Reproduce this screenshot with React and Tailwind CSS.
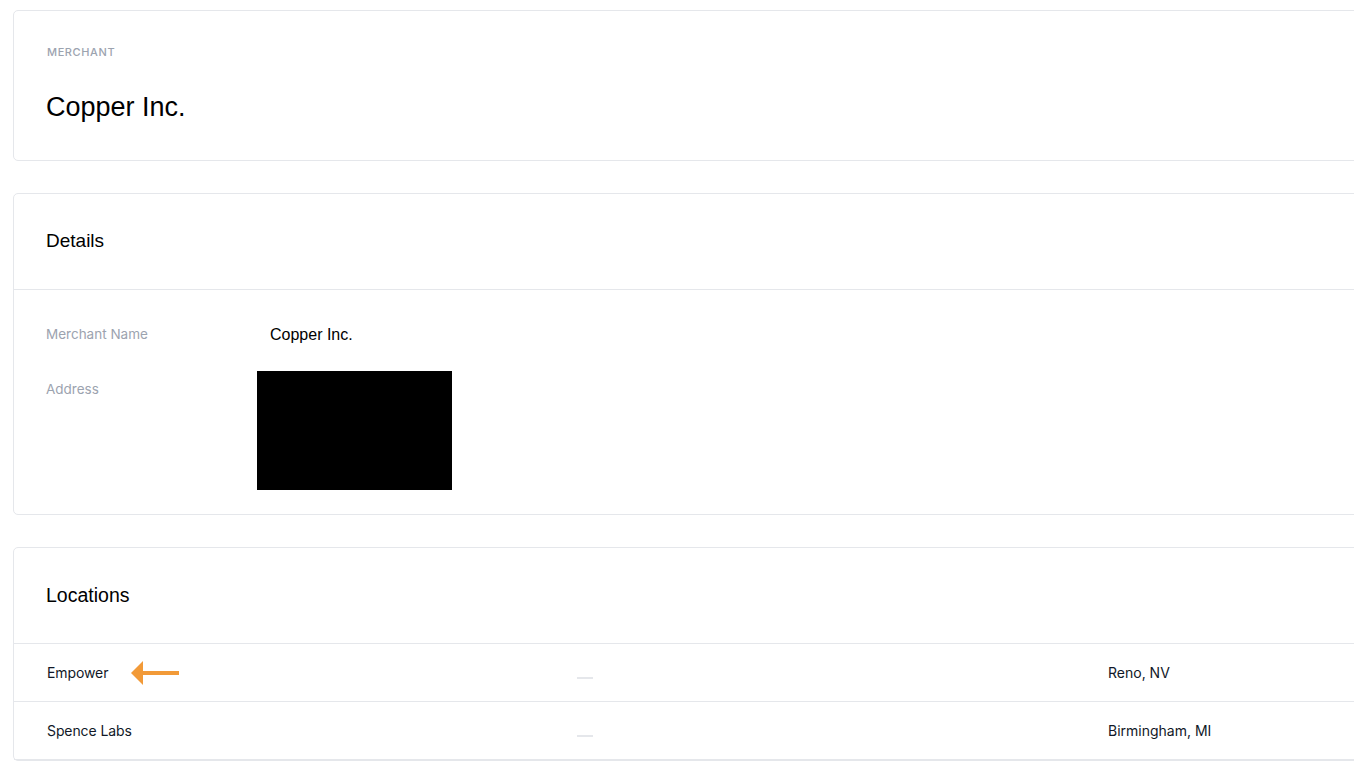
import React from 'react';

const sans = { fontFamily: 'Inter, "Noto Sans", sans-serif' };
const helv = { fontFamily: '"Liberation Sans", Arial, sans-serif' };

function Card({ children, className = '' }) {
  return (
    <div className={`w-[1595px] ml-[13px] bg-white border border-[#e5e7eb] rounded-[5px] ${className}`}>
      {children}
    </div>
  );
}

function Dash() {
  return <div className="w-[16px] h-[2px] bg-[#e5e7eb] mt-[10px]" />;
}

function Arrow() {
  return (
    <svg width="50" height="26" viewBox="0 0 50 26" className="ml-[23px]">
      <path d="M0 13 L12 1 L12 25 Z" fill="#f29a38" />
      <rect x="11" y="11" width="37" height="4" fill="#f29a38" />
    </svg>
  );
}

const locations = [
  { name: 'Empower', city: 'Reno, NV', flag: true },
  { name: 'Spence Labs', city: 'Birmingham, MI' },
];

export default function App() {
  return (
    <div className="w-[1354px] h-[762px] overflow-hidden bg-white pt-[10px]">
      <Card className="h-[151px] px-[33px] pt-[33px]">
        <div className="text-[11px] font-medium tracking-[0.6px] text-[#9ca3af] uppercase leading-[16px]" style={sans}>
          Merchant
        </div>
        <div className="text-[27px] text-black mt-[31px] leading-[32px] -ml-[1px]" style={helv}>
          Copper Inc.
        </div>
      </Card>

      <Card className="mt-[32px]">
        <div className="h-[96px] px-[32px] flex items-center border-b border-[#e5e7eb]">
          <div className="text-[19px] text-black" style={helv}>Details</div>
        </div>
        <div className="px-[32px] pt-[35px] pb-[24px]">
          <div className="flex">
            <div className="w-[225px] text-[13.5px] text-[#9ca3af] leading-[18px]" style={sans}>Merchant Name</div>
            <div className="ml-[-1px] text-[16px] text-black leading-[20px]" style={helv}>Copper Inc.</div>
          </div>
          <div className="flex mt-[26px]">
            <div className="w-[211px] text-[13.5px] text-[#9ca3af] leading-[18px] pt-[9px]" style={sans}>Address</div>
            <div className="w-[195px] h-[119px] bg-black" />
          </div>
        </div>
      </Card>

      <Card className="mt-[32px]">
        <div className="h-[96px] px-[32px] flex items-center border-b border-[#e5e7eb]">
          <div className="text-[19.5px] text-black" style={helv}>Locations</div>
        </div>
        {locations.map((l) => (
          <div key={l.name} className="grid grid-cols-3 h-[58px] border-b border-[#e5e7eb] items-center text-[14px] text-[#111827]" style={sans}>
            <div className="pl-[33px] flex items-center">
              <span className="tracking-[-0.1px]">{l.name}</span>
              {l.flag && <Arrow />}
            </div>
            <div className="pl-[32px]"><Dash /></div>
            <div className="pl-[32px]">{l.city}</div>
          </div>
        ))}
      </Card>
    </div>
  );
}
